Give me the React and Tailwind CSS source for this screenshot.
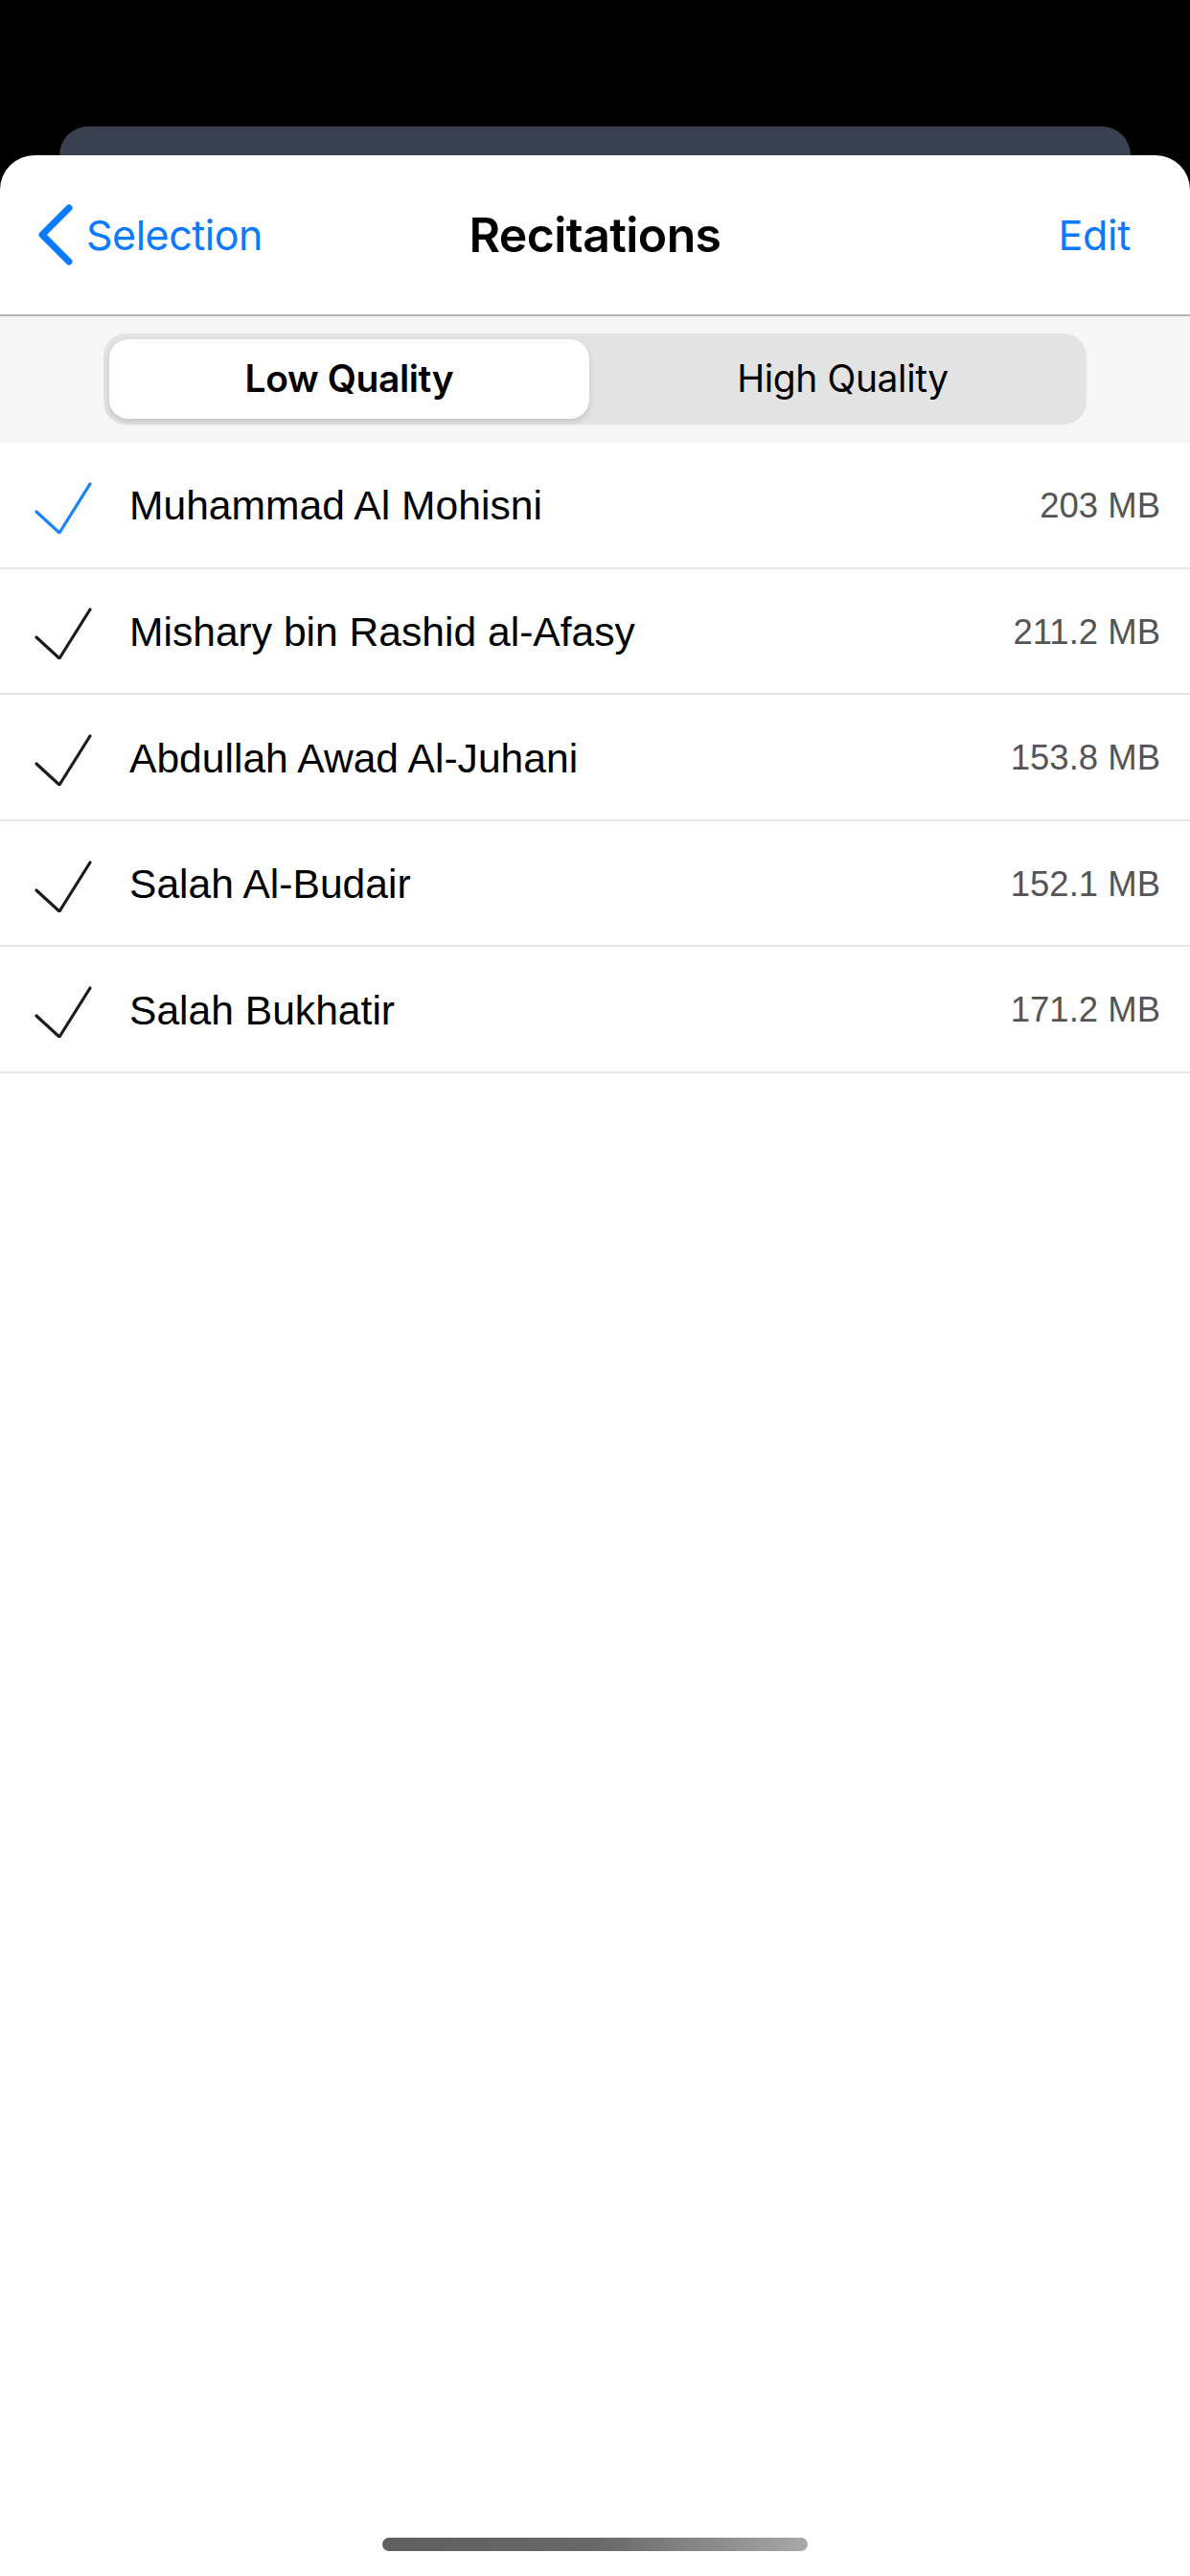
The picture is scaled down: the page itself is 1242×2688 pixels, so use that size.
import React from 'react';

const recitations = [
    { name: 'Muhammad Al Mohisni', size: '203 MB', active: true },
    { name: 'Mishary bin Rashid al-Afasy', size: '211.2 MB' },
    { name: 'Abdullah Awad Al-Juhani', size: '153.8 MB' },
    { name: 'Salah Al-Budair', size: '152.1 MB' },
    { name: 'Salah Bukhatir', size: '171.2 MB' },
];

const Check = ({ active }) => (
    <svg width="60" height="56" viewBox="0 0 60 56" className="shrink-0 mt-[4px]">
        <path
            d="M2 33 L26 55 L58 4"
            fill="none"
            stroke={active ? '#1a82fb' : '#1c1c1c'}
            strokeWidth="3.2"
            strokeLinecap="round"
            strokeLinejoin="round"
        />
    </svg>
);

const App = () => {
    return (
        <div className="w-[1242px] h-[2688px] bg-black flex flex-col overflow-hidden">
            {/* card behind the sheet */}
            <div className="mt-[132px] mx-[62px] h-[30px] bg-[#394050] rounded-t-[30px] shrink-0"></div>

            <div className="flex-1 bg-white rounded-t-[36px] flex flex-col">
                {/* Navbar */}
                <div className="h-[168px] shrink-0 flex items-center justify-between px-[38px] border-b-[2px] border-[#b4b4b4] font-['Inter',sans-serif]">
                    <div className="flex items-center gap-[14px] w-[300px] text-[#0a7aff]">
                        <svg width="38" height="64" viewBox="0 0 38 64">
                            <path d="M34 4 L6 32 L34 60" fill="none" stroke="#0a7aff" strokeWidth="7" strokeLinecap="round" strokeLinejoin="round" />
                        </svg>
                        <span className="text-[43px] tracking-[-0.5px]">Selection</span>
                    </div>
                    <h1 className="text-[50px] font-semibold text-black tracking-[-0.6px]">Recitations</h1>
                    <div className="w-[300px] flex justify-end pr-[24px]">
                        <span className="text-[43px] text-[#0a7aff] tracking-[-0.3px]">Edit</span>
                    </div>
                </div>

                {/* Quality switch */}
                <div className="h-[132px] shrink-0 bg-[#f6f6f6] pt-[18px] px-[108px]">
                    <div className="w-[1026px] h-[95px] bg-[#e3e3e3] rounded-[24px] p-[6px] flex font-['Inter',sans-serif] text-[39px] text-black tracking-[-0.4px]">
                        <div className="w-[501px] h-full bg-white rounded-[20px] shadow-[0_3px_6px_rgba(0,0,0,0.14)] flex items-center justify-center font-semibold">
                            Low Quality
                        </div>
                        <div className="flex-1 flex items-center justify-center pl-[16px]">High Quality</div>
                    </div>
                </div>

                {/* List */}
                <div className="font-['Liberation_Sans',Arial,sans-serif]">
                    {recitations.map((r) => (
                        <div key={r.name} className="h-[131.6px] flex items-center border-b-[2px] border-[#e6e6e6] pl-[36px] pr-[31px]">
                            <Check active={r.active} />
                            <span className="ml-[39px] flex-1 text-[42.6px] text-black mt-[3px]">{r.name}</span>
                            <span className="text-[36.5px] text-[#555555] mt-[3px]">{r.size}</span>
                        </div>
                    ))}
                </div>

                {/* home indicator */}
                <div className="mt-auto mb-[26px] mx-auto w-[444px] h-[14px] rounded-full bg-gradient-to-r from-[#5f5f5f] via-[#686868] to-[#a8a8a8]"></div>
            </div>
        </div>
    );
};

export default App;
